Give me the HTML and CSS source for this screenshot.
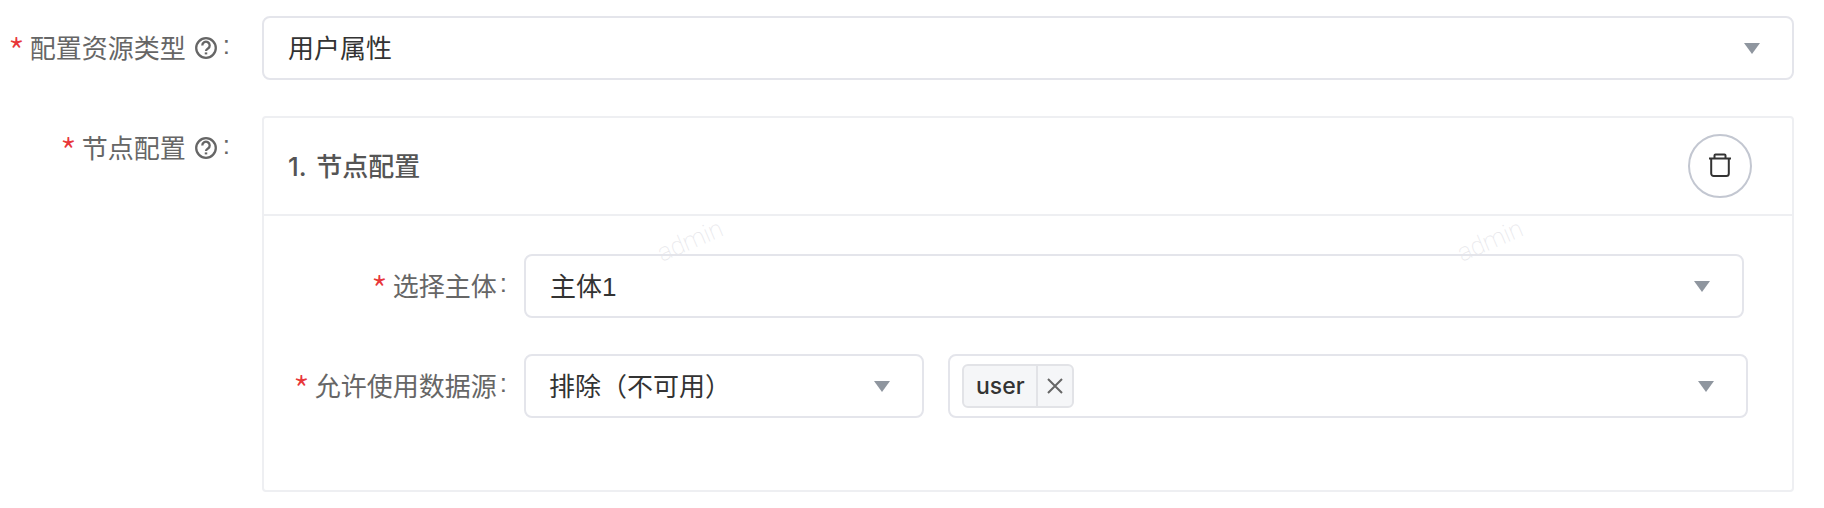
FILE: index.html
```html
<!DOCTYPE html>
<html lang="en">
<head>
    <meta charset="UTF-8">
    <title>节点配置</title>
    <link rel="stylesheet" href="styles.css">
</head>
<body>
    <form class="form">
        <div class="form-row">
            <label class="form-label">
                <span class="required">*</span>配置资源类型
                <svg class="help-icon" viewBox="0 0 22 22"><circle cx="11" cy="11" r="9.8"/><path d="M7.300 8.500a3.700 3.700 0 1 1 5.700 3c-1.300.8-2 1.300-2 2.500"/><path class="dot" d="M11 15.400v2"/></svg>
                <span class="colon">:</span>
            </label>
            <div class="select select-wide">
                <span>用户属性</span>
                <i class="arrow"></i>
            </div>
        </div>

        <div class="form-row">
            <label class="form-label">
                <span class="required">*</span>节点配置
                <svg class="help-icon" viewBox="0 0 22 22"><circle cx="11" cy="11" r="9.8"/><path d="M7.300 8.500a3.700 3.700 0 1 1 5.700 3c-1.300.8-2 1.300-2 2.500"/><path class="dot" d="M11 15.400v2"/></svg>
                <span class="colon">:</span>
            </label>
            <div class="card">
                <div class="card-header">
                    <span class="card-title">1. 节点配置</span>
                    <button type="button" class="delete-btn">
                        <svg viewBox="0 0 24 24" width="24" height="24"><path d="M1 5.500h22M6.500 5.500V2.500a1 1 0 0 1 1-1h9a1 1 0 0 1 1 1v3M3.200 5.500v15a2.500 2.500 0 0 0 2.500 2.500h12.600a2.500 2.500 0 0 0 2.500-2.500v-15"/></svg>
                    </button>
                </div>
                <div class="card-body">
                    <div class="sub-row sub-row-first">
                        <label class="sub-label"><span class="required">*</span>选择主体<span class="colon">:</span></label>
                        <div class="select select-subject">
                            <span>主体1</span>
                            <i class="arrow"></i>
                        </div>
                    </div>
                    <div class="sub-row">
                        <label class="sub-label"><span class="required">*</span>允许使用数据源<span class="colon">:</span></label>
                        <div class="select select-mode">
                            <span>排除（不可用）</span>
                            <i class="arrow"></i>
                        </div>
                        <div class="select select-multi">
                            <span class="tag">
                                <span class="tag-text">user</span>
                                <span class="tag-close">
                                    <svg viewBox="0 0 16 16" width="16" height="16"><path d="M1 1l14 14M15 1L1 15"/></svg>
                                </span>
                            </span>
                            <i class="arrow"></i>
                        </div>
                    </div>
                    <!-- watermark -->
                    <span class="watermark watermark-left">admin</span>
                    <span class="watermark watermark-right">admin</span>
                </div>
            </div>
        </div>
    </form>
</body>
</html>
```

FILE: styles.css
```css
* {
    box-sizing: border-box;
}

body {
    margin: 0;
    background-color: #ffffff;
    font-family: "Liberation Sans", "Noto Sans CJK SC", sans-serif;
    font-size: 26px;
    color: #333;
}

.form {
    padding: 16px 30px 0 0;
}

.form-row {
    display: flex;
    align-items: flex-start;
    margin-bottom: 36px;
}

.form-label {
    width: 262px;
    height: 64px;
    flex-shrink: 0;
    display: flex;
    align-items: center;
    justify-content: flex-end;
    padding: 0 32px 3px 0;
    color: #666;
    white-space: nowrap;
}

.required {
    color: #e8363a;
    font-family: "Noto Sans CJK SC", sans-serif;
    font-size: 38px;
    font-weight: 300;
    line-height: 1;
    margin-right: 5px;
    position: relative;
    top: 4px;
}

.colon {
    margin-left: 6px;
    position: relative;
    top: -1px;
}

.help-icon {
    width: 22px;
    height: 22px;
    margin: 3px 0 0 9px;
    fill: none;
    stroke: #666;
    stroke-width: 2.300;
}

.help-icon .dot {
    stroke-width: 2.500;
}

.select {
    height: 64px;
    display: flex;
    align-items: center;
    justify-content: space-between;
    padding: 0 32px 3px 24px;
    background-color: #fff;
    border: 2px solid #e4e5eb;
    border-radius: 8px;
}

.select-wide {
    flex: 1;
}

.arrow {
    width: 0;
    height: 0;
    flex-shrink: 0;
    border-left: 8px solid transparent;
    border-right: 8px solid transparent;
    border-top: 11px solid #8f969f;
    margin-top: 4px;
}

/* Card for one node */
.card {
    flex: 1;
    height: 376px;
    border: 2px solid #eeeff2;
    border-radius: 4px;
}

.card-header {
    height: 98px;
    display: flex;
    align-items: center;
    justify-content: space-between;
    padding: 0 40px 0 24px;
    border-bottom: 2px solid #eeeff2;
}

.card-title {
    margin-bottom: 4px;
    font-family: Inter, "Noto Sans CJK SC", sans-serif;
    font-weight: 500;
    word-spacing: 3px;
    color: #555;
}

.delete-btn {
    width: 64px;
    height: 64px;
    padding: 0;
    display: flex;
    align-items: center;
    justify-content: center;
    background-color: #fff;
    border: 2px solid #c3c7d1;
    border-radius: 50%;
}

.delete-btn svg {
    margin-bottom: 3px;
    fill: none;
    stroke: #333;
    stroke-width: 2;
}

.card-body {
    position: relative;
    padding: 38px 44px 0 0;
}

.sub-row {
    display: flex;
    align-items: center;
    margin-bottom: 36px;
}

.sub-row-first {
    padding-right: 4px;
}

.sub-label {
    width: 260px;
    height: 64px;
    flex-shrink: 0;
    display: flex;
    justify-content: flex-end;
    align-items: center;
    padding: 0 17px 3px 0;
    color: #666;
    white-space: nowrap;
}

.sub-label .colon {
    margin-left: 3px;
}

.select-subject {
    flex: 1;
}

.select-mode {
    width: 400px;
    margin-right: 24px;
    padding-left: 23px;
}

.select-multi {
    flex: 1;
    padding-left: 12px;
    padding-bottom: 0;
}

.select-multi .arrow {
    margin-top: 1px;
}

.tag {
    height: 44px;
    display: flex;
    align-items: center;
    background-color: #f5f6f8;
    border: 2px solid #e2e3e7;
    border-radius: 6px;
}

.tag-text {
    padding: 0 11px 0 12px;
    font-family: Inter, "Liberation Sans", sans-serif;
    font-size: 23px;
    font-weight: 500;
    color: #333;
}

.tag-close {
    width: 36px;
    height: 100%;
    display: flex;
    align-items: center;
    justify-content: center;
    border-left: 2px solid #e2e3e7;
}

.tag-close svg {
    fill: none;
    stroke: #666;
    stroke-width: 2;
}

.watermark {
    position: absolute;
    top: 10px;
    font-family: Roboto, "Liberation Sans", sans-serif;
    font-size: 25px;
    font-weight: 100;
    color: #e6e6ea;
    transform: rotate(-23deg);
    pointer-events: none;
}

.watermark-left {
    left: 392px;
}

.watermark-right {
    left: 1192px;
}
```
